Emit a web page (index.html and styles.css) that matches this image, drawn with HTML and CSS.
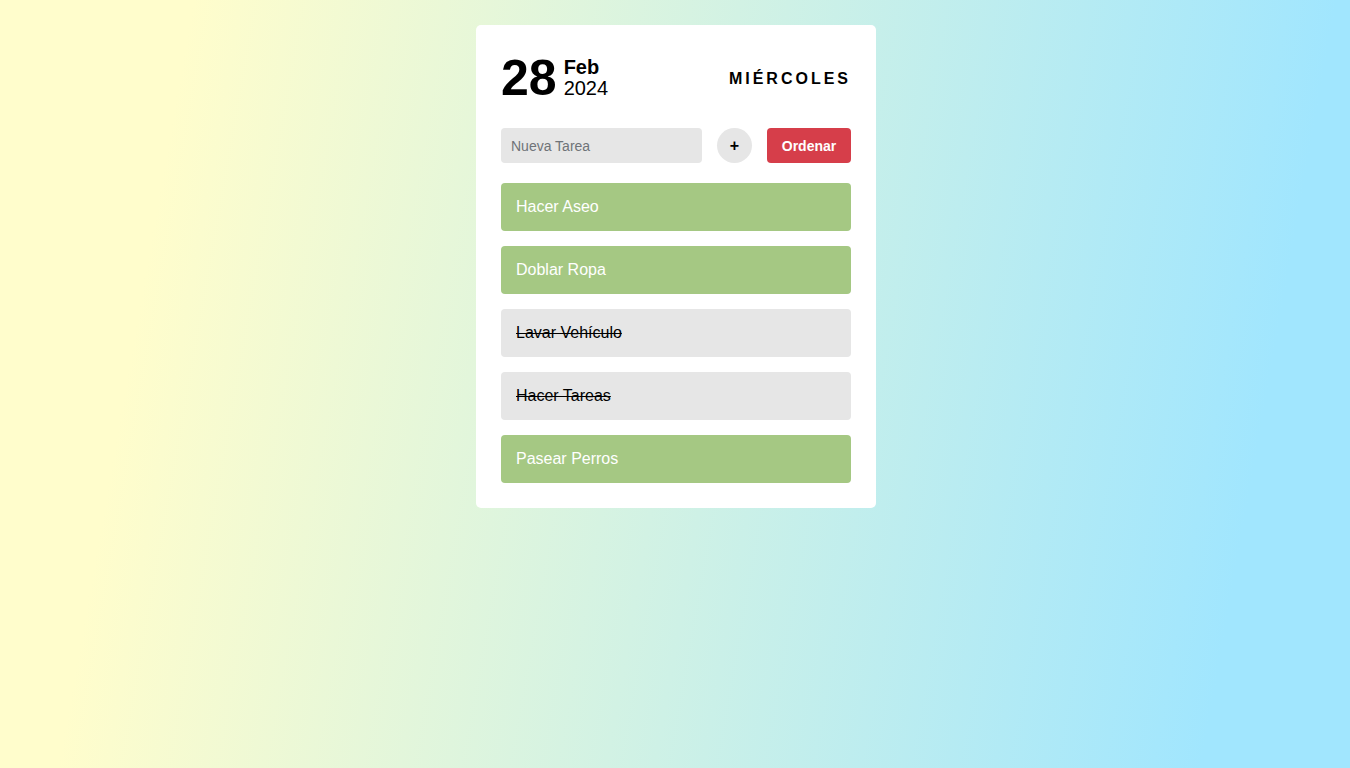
FILE: index.html
```html
<!DOCTYPE html>
<html lang="es">
<head>
<meta charset="utf-8">
<title>Tareas</title>
<link rel="stylesheet" href="styles.css">
</head>
<body>
<div class="card">
  <header class="head">
    <div class="date">
      <span class="day">28</span>
      <div class="monthyear">
        <span class="month">Feb</span>
        <span class="year">2024</span>
      </div>
    </div>
    <div class="weekday">MIÉRCOLES</div>
  </header>
  <form class="newtask" onsubmit="return false">
    <input class="input" type="text" placeholder="Nueva Tarea">
    <button class="add" type="button">+</button>
    <button class="sort" type="button">Ordenar</button>
  </form>
  <ul class="tasks">
    <li class="task todo">Hacer Aseo</li>
    <li class="task todo">Doblar Ropa</li>
    <li class="task done">Lavar Vehículo</li>
    <li class="task done">Hacer Tareas</li>
    <li class="task todo">Pasear Perros</li>
  </ul>
</div>
</body>
</html>
```
FILE: styles.css
```css
html, body {
  height: 100%;
}
body {
  margin: 0;
  padding-left: 2px;
  box-sizing: border-box;
  font-family: "Liberation Sans", Arial, sans-serif;
  background: linear-gradient(100deg, #fffdcc 13%, #a1e6fe 90%);
}
.card {
  width: 400px;
  box-sizing: border-box;
  margin: 25px auto 0;
  padding: 25px;
  background: #fff;
  border-radius: 5px;
}
.head {
  display: flex;
  align-items: center;
  justify-content: space-between;
  margin-bottom: 22px;
}
.date {
  display: flex;
  align-items: center;
  gap: 7px;
}
.day {
  font-size: 50px;
  font-weight: bold;
  line-height: 56px;
}
.monthyear {
  display: flex;
  flex-direction: column;
  font-size: 20px;
  line-height: 21px;
}
.month {
  font-weight: bold;
}
.weekday {
  font-size: 16px;
  font-weight: bold;
  letter-spacing: 3px;
  line-height: 18px;
  margin-top: 1px;
}
.newtask {
  display: flex;
  gap: 15px;
  margin: 0 0 20px;
}
.input {
  width: 201px;
  height: 35px;
  box-sizing: border-box;
  border: none;
  border-radius: 4px;
  background: #e6e6e6;
  padding: 0 10px;
  font-family: "Liberation Sans", Arial, sans-serif;
  font-size: 14px;
  outline: none;
}
.input::placeholder {
  color: #6f7378;
}
.add {
  width: 35px;
  height: 35px;
  border: none;
  border-radius: 50%;
  background: #e6e6e6;
  font-family: "Liberation Sans", Arial, sans-serif;
  font-size: 16px;
  font-weight: 900;
  padding: 0;
  color: #000;
  line-height: 35px;
}
.sort {
  flex: 1;
  height: 35px;
  border: none;
  border-radius: 4px;
  background: #d63e4a;
  color: #fff;
  font-family: "Liberation Sans", Arial, sans-serif;
  font-size: 14px;
  font-weight: bold;
  padding: 0;
}
.tasks {
  list-style: none;
  margin: 0;
  padding: 0;
  display: flex;
  flex-direction: column;
  gap: 15px;
}
.task {
  height: 48px;
  box-sizing: border-box;
  display: flex;
  align-items: center;
  padding: 0 15px;
  border-radius: 4px;
  font-size: 16px;
}
.todo {
  background: #a5c883;
  color: #fff;
}
.done {
  background: #e6e6e6;
  color: #000;
  text-decoration: line-through;
}
```
